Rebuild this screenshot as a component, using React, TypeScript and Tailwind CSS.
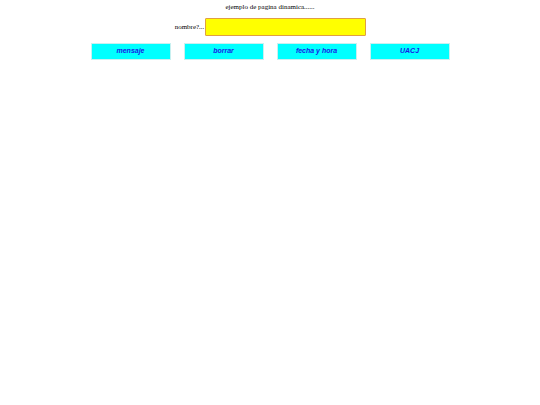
export default function App() {
  const buttons = ["mensaje", "borrar", "fecha y hora", "UACJ"];

  return (
    <div className="w-[540px] h-[405px] bg-white">
      <p className="pt-[3px] text-center text-[7px] leading-[8px] text-black [font-family:'Liberation_Serif',serif]">
        ejemplo de pagina dinamica......
      </p>
      <div className="mt-[7px] flex items-center justify-center pl-[1px]">
        <span className="text-[7px] text-black [font-family:'Liberation_Serif',serif]">nombre?...</span>
        <input
          type="text"
          className="ml-[1px] h-[18px] w-[161px] rounded-[1px] border border-[#e0a040] bg-[#ffff00] outline-none"
        />
      </div>
      <div className="mt-[7px] flex justify-center gap-[13px]">
        {buttons.map((b) => (
          <button
            key={b}
            className="flex h-[17px] w-[80px] items-center justify-center border border-[#c8f0f0] bg-[#00ffff] text-[7px] font-bold italic text-[#1a1ae6] [font-family:'Liberation_Sans',Arial,sans-serif]"
          >
            {b}
          </button>
        ))}
      </div>
    </div>
  );
}
